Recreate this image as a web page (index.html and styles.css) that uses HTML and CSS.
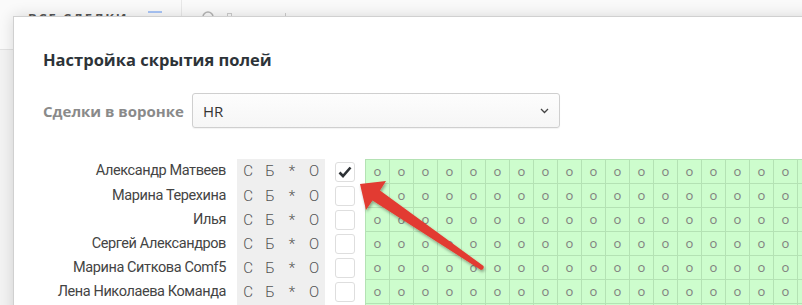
FILE: index.html
```html
<!DOCTYPE html>
<html lang="ru">
<head>
  <meta charset="UTF-8" />
  <meta name="viewport" content="width=device-width, initial-scale=1.0" />
  <title>Настройка скрытия полей</title>
  <link rel="stylesheet" href="styles.css">
</head>
<body>
  <!-- Page header behind the modal -->
  <header class="topbar">
    <div class="topbar-title">
      <span>Все сделки</span>
      <span class="menu-icon"></span>
    </div>
    <div class="topbar-search">
      <svg width="14" height="14" viewBox="0 0 14 14"><circle cx="6" cy="6" r="5" fill="none" stroke="#b5b5b5" stroke-width="1.6"/></svg>
      <span class="search-box"></span>
      <span class="search-tick"></span>
    </div>
  </header>

  <div class="modal">
    <h2 class="modal-title">Настройка скрытия полей</h2>
    <div class="pipeline">
      <label class="pipeline-label">Сделки в воронке</label>
      <div class="select">
        <span>HR</span>
        <svg class="chevron" width="9" height="6" viewBox="0 0 9 6"><path d="M1 1 L4.5 4.5 L8 1" fill="none" stroke="#444" stroke-width="1.3"/></svg>
      </div>
    </div>
    <div class="users" id="users"></div>
  </div>

  <!-- Red pointer arrow over the table -->
  <svg class="arrow" width="802" height="305" viewBox="0 0 802 305">
    <defs>
      <filter id="shadow" x="-10%" y="-10%" width="130%" height="130%">
        <feDropShadow dx="1" dy="2" stdDeviation="1.5" flood-color="#000" flood-opacity="0.35"/>
      </filter>
    </defs>
    <path d="M360 184 L386 181 L380 190.5 L483.5 266 Q484.5 269.5 481 270 L372.5 200.5 L366 210 Z" fill="#e23b30" filter="url(#shadow)"/>
  </svg>

  <script>
    const users = [
      { name: 'Александр Матвеев', checked: true },
      { name: 'Марина Терехина', checked: false },
      { name: 'Илья', checked: false },
      { name: 'Сергей Александров', checked: false },
      { name: 'Марина Ситкова Comf5', checked: false },
      { name: 'Лена Николаева Команда', checked: false },
      { name: '', checked: false }
    ];
    const list = document.getElementById('users');

    users.forEach(function (user, index) {
      const row = document.createElement('div');
      row.className = 'user-row' + (index === 0 ? ' first' : '');

      let cells = '';
      for (let i = 0; i < 19; i++) {
        cells += '<span class="field">o</span>';
      }

      row.innerHTML =
        '<span class="user-name">' + user.name + '</span>' +
        '<span class="flags"><span>С</span><span>Б</span><span>*</span><span>О</span></span>' +
        '<span class="check-cell"><span class="check">' +
        (user.checked ? '<svg width="14" height="12" viewBox="0 0 14 12"><path d="M1.5 6.5 L5 10 L12.5 1.5" fill="none" stroke="#2e3236" stroke-width="2.6"/></svg>' : '') +
        '</span></span>' +
        '<span class="fields">' + cells + '</span>';
      list.appendChild(row);
    });
  </script>
</body>
</html>
```

FILE: styles.css
```css
/* Base styles */
* {
  box-sizing: border-box;
}
body {
  margin: 0;
  width: 802px;
  height: 305px;
  overflow: hidden;
  position: relative;
  font-family: "Open Sans", Arial, sans-serif;
  background-color: #f3f3f3;
}
/* Page header, mostly hidden by the modal */
.topbar {
  display: flex;
  height: 50px;
  background: #fafafa;
  border-bottom: 1px solid #e2e2e2;
}
.topbar-title {
  display: flex;
  align-items: flex-start;
  width: 182px;
  padding: 9px 0 0 28px;
  border-right: 1px solid #e8e8e8;
  font-size: 13px;
  font-weight: 700;
  letter-spacing: 1.8px;
  text-transform: uppercase;
  color: #555;
}
.menu-icon {
  width: 14px;
  height: 2px;
  margin: 2px 0 0 20px;
  background: #a9c5f7;
}
.topbar-search {
  display: flex;
  align-items: flex-start;
  padding: 11px 0 0 20px;
}
.search-box {
  width: 5px;
  height: 6px;
  margin: 2px 0 0 11px;
  border: 1px solid #ccc;
}
.search-tick {
  width: 1px;
  height: 5px;
  margin: 2px 0 0 53px;
  background: #ccc;
}
/* Modal window */
.modal {
  position: absolute;
  top: 16px;
  left: 13px;
  width: 900px;
  height: 400px;
  padding: 31px 0 0 29px;
  background: #fff;
  border: 1px solid #d0d0d0;
  box-shadow: 0 0 14px rgba(0, 0, 0, 0.14);
}
.modal-title {
  margin: 0;
  font-size: 16.5px;
  line-height: 24px;
  font-weight: 700;
  color: #2d3338;
}
.pipeline {
  display: flex;
  align-items: center;
  margin-top: 21px;
}
.pipeline-label {
  margin-right: 8px;
  font-size: 15px;
  font-weight: 700;
  color: #8a8a8a;
}
.select {
  display: flex;
  align-items: center;
  justify-content: space-between;
  width: 368px;
  height: 35px;
  padding: 0 10px 0 10px;
  font-size: 15px;
  color: #333;
  background: linear-gradient(#fdfdfd, #f6f6f6);
  border: 1px solid #cfcfcf;
  border-radius: 3px;
  box-shadow: 0 1px 1px rgba(0, 0, 0, 0.05);
}
/* Users table */
.users {
  margin-top: 31px;
  font-family: Roboto, "Open Sans", sans-serif;
}
.user-row {
  display: flex;
}
.user-name {
  width: 183px;
  margin-right: 11px;
  font-size: 14.5px;
  letter-spacing: -0.4px;
  line-height: 24px;
  text-align: right;
  color: #444;
  white-space: nowrap;
}
.flags {
  display: flex;
  width: 88px;
  background: #efefef;
  font-size: 15px;
  font-weight: 300;
  line-height: 24px;
  color: #555;
}
.flags span {
  width: 22px;
  text-align: center;
}
.check-cell {
  display: flex;
  align-items: center;
  padding: 0 10px;
}
.check {
  display: flex;
  align-items: center;
  justify-content: center;
  width: 20px;
  height: 20px;
  background: #fff;
  border: 1px solid #dedede;
  border-radius: 3px;
}
.fields {
  display: flex;
  border-left: 1px solid #b4e2b4;
}
.user-row.first .fields {
  border-top: 1px solid #b4e2b4;
}
.field {
  flex: none;
  width: 24px;
  height: 24px;
  background: #cdfdcd;
  border-right: 1px solid #b4e2b4;
  border-bottom: 1px solid #b4e2b4;
  font-family: "Open Sans", sans-serif;
  font-size: 13px;
  line-height: 22px;
  text-align: center;
  color: #808080;
}
/* Arrow overlay */
.arrow {
  position: absolute;
  top: 0;
  left: 0;
  pointer-events: none;
}
```
